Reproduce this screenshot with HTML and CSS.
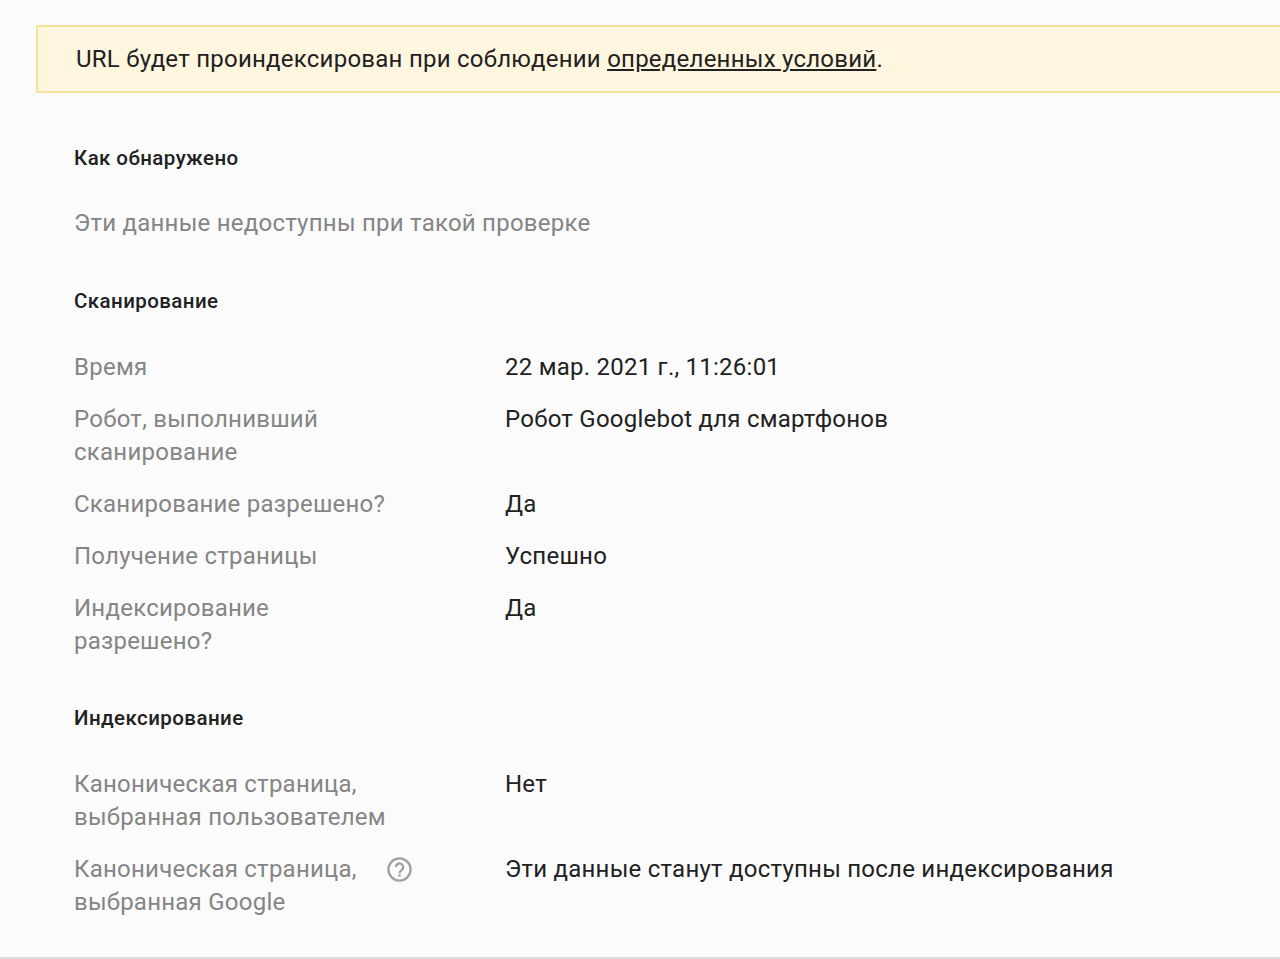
FILE: index.html
```html
<!DOCTYPE html>
<html lang="ru">
<head>
<meta charset="utf-8">
<title>URL</title>
<link rel="stylesheet" href="styles.css">
</head>
<body>
<main class="page">
  <div class="notice">URL будет проиндексирован при соблюдении <a href="#">определенных условий</a>.</div>
  <section class="section first">
    <h2>Как обнаружено</h2>
    <p class="muted">Эти данные недоступны при такой проверке</p>
  </section>
  <section class="section">
    <h2>Сканирование</h2>
    <div class="rows">
      <div class="row"><div class="label">Время</div><div class="value">22 мар. 2021 г., 11:26:01</div></div>
      <div class="row"><div class="label">Робот, выполнивший сканирование</div><div class="value">Робот Googlebot для смартфонов</div></div>
      <div class="row"><div class="label">Сканирование разрешено?</div><div class="value">Да</div></div>
      <div class="row"><div class="label">Получение страницы</div><div class="value">Успешно</div></div>
      <div class="row"><div class="label">Индексирование разрешено?</div><div class="value">Да</div></div>
    </div>
  </section>
  <section class="section last">
    <h2>Индексирование</h2>
    <div class="rows">
      <div class="row"><div class="label">Каноническая страница, выбранная пользователем</div><div class="value">Нет</div></div>
      <div class="row"><div class="label">Каноническая страница, выбранная Google<svg class="help" viewBox="0 0 26 26" aria-hidden="true"><circle cx="13" cy="13" r="11.5" fill="none" stroke="currentColor" stroke-width="2.4"/><path d="M9.2 10.4a3.8 3.8 0 1 1 6.2 3c-1.4 1.1-2.4 1.8-2.4 3.4" fill="none" stroke="currentColor" stroke-width="2.4"/><rect x="11.8" y="18" width="2.4" height="2.4" fill="currentColor"/></svg></div><div class="value">Эти данные станут доступны после индексирования</div></div>
    </div>
  </section>
</main>
</body>
</html>
```
FILE: styles.css
```css
html, body { margin: 0; padding: 0; background: #fbfbfb; }
body { font-family: Roboto, "Liberation Sans", sans-serif; height: 959px; overflow: hidden; box-sizing: border-box; border-bottom: 2px solid #dcdcdc; letter-spacing: 0.24px; }
.page { padding: 25px 0 0 36px; }
.notice { background: #fff6e0; border: 2px solid #f5e29a; border-right: 0; height: 64px; line-height: 64px; padding-left: 38px; font-size: 24px; color: #212121; }
.notice a { color: #212121; text-decoration: underline; }
.section { padding-left: 38px; margin-top: 46px; }
.section.first { margin-top: 50px; }
.section.last { margin-top: 45px; }
h2 { margin: 0; font-size: 20.5px; line-height: 30px; font-weight: 500; color: #212121; letter-spacing: 0.42px; }
.muted { margin: 34px 0 0; font-size: 24px; line-height: 33px; color: #858585; }
.rows { margin-top: 35px; display: flex; flex-direction: column; gap: 19px; }
.row { display: flex; font-size: 24px; line-height: 33px; }
.label { position: relative; width: 320px; margin-right: 111px; color: #858585; }
.value { color: #212121; }
.help { position: absolute; left: 313px; top: 4px; width: 25px; height: 25px; color: #a0a0a0; }
```
